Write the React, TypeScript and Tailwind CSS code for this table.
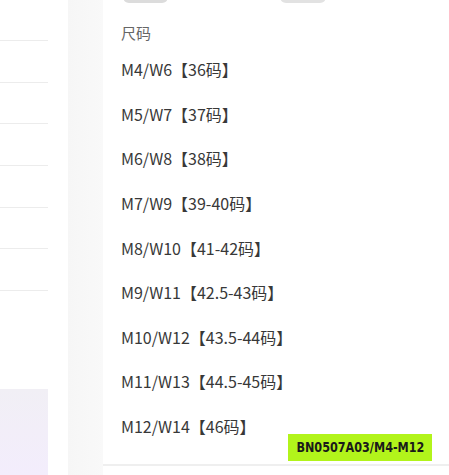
const sizes = [
  'M4/W6【36码】',
  'M5/W7【37码】',
  'M6/W8【38码】',
  'M7/W9【39-40码】',
  'M8/W10【41-42码】',
  'M9/W11【42.5-43码】',
  'M10/W12【43.5-44码】',
  'M11/W13【44.5-45码】',
  'M12/W14【46码】',
];

export default function App() {
  return (
    <div
      className="relative flex h-[475px] w-[449px] overflow-hidden bg-white"
      style={{ fontFamily: '"Noto Sans CJK SC", "Noto Sans", sans-serif' }}
    >
      {/* left list behind */}
      <div className="flex w-[48px] shrink-0 flex-col">
        <div className="h-[41px] border-b border-[#ececec]" />
        {[0, 1, 2, 3, 4, 5].map((i) => (
          <div key={i} className="h-[41.7px] border-b border-[#ececec]" />
        ))}
        <div className="h-[98px]" />
        <div className="flex-1 bg-gradient-to-b from-[#f1eff5] to-[#f3edfc]" />
      </div>

      {/* shadow gap */}
      <div className="w-[20px] shrink-0" />
      <div className="w-[35px] shrink-0 bg-gradient-to-r from-[#f6f6f6] to-[#f9f9f9]" />

      {/* size panel */}
      <div className="relative flex flex-1 flex-col">
        <div className="-mt-[10px] flex gap-[112px] pl-[20px]">
          <div className="h-[13px] w-[45px] rounded-[6px] bg-[#dcdcdc]" />
          <div className="h-[13px] w-[46px] rounded-[6px] bg-[#e2e2e2]" />
        </div>
        <div className="pl-[18px] pt-[20px] text-[15px] leading-[20px] text-[#666]">尺码</div>
        <div className="flex flex-col pt-[4px]">
          {sizes.map((s) => (
            <div
              key={s}
              className="flex h-[44.6px] items-center whitespace-nowrap pl-[18px] text-[16px] text-[#383838]"
            >
              {s}
            </div>
          ))}
        </div>
        <div className="mt-auto mb-[9px] h-[2px] bg-[#efefef]" />
      </div>

      <div className="absolute left-[288px] top-[434px] flex h-[27px] w-[144px] items-center justify-center overflow-hidden bg-[#b2f41b]">
        <span
          className="scale-x-[0.86] whitespace-nowrap text-[14.5px] font-bold text-[#1a1a1a]"
          style={{ fontFamily: '"DejaVu Sans Condensed", "DejaVu Sans", sans-serif' }}
        >
          BN0507A03/M4-M12
        </span>
      </div>
    </div>
  );
}
